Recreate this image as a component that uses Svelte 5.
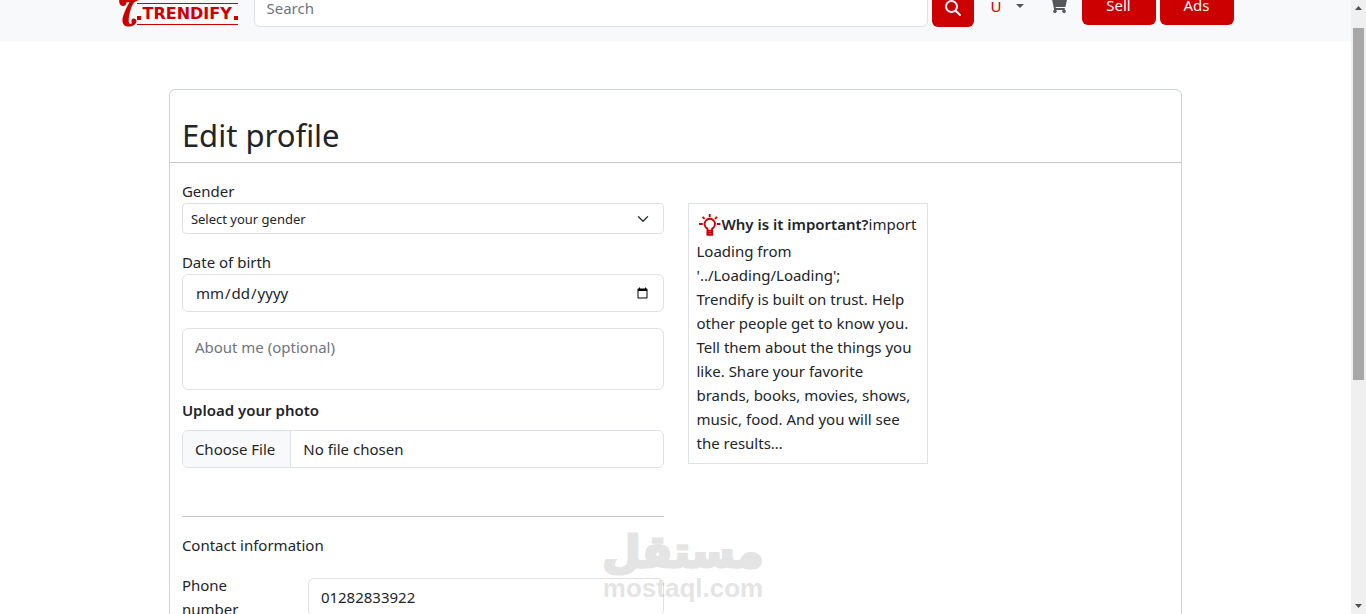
<script lang="ts">
	let search = $state('');
	let gender = $state('');
	let birthDate = $state('');
	let about = $state('');
	let phone = $state('01282833922');
</script>

<div class="shell">
	<div class="page">
		<header class="navbar">
			<div class="container">
				<a class="logo" href="/" aria-label="Trendify home">
					<svg class="swash" viewBox="0 0 22 27" width="22" height="27" aria-hidden="true">
						<path d="M1.200 0C.9 3.500 2.500 6 5 6S8.500 4.200 8.300 2.400L11.500 2C9.500 5.500 7 10.500 5.300 15.500c-1.800 5-1 11 4.700 11 4.700 0 8.500-2.300 8.500-5.300 0-3.200-4.500-3.400-5-.7-.3 1.500.7 2.200 0 3-1.200 1-2.800.2-2.800-2.500C10.700 15 13 6.500 16 2.500 17.500 1.200 19.500.8 21 0z" />
					</svg>
					<span class="wordmark"><i></i>TRENDIFY<i></i></span>
				</a>
				<form class="search" role="search">
					<input class="control" type="search" placeholder="Search" aria-label="Search" bind:value={search} />
					<button class="btn btn-search" type="submit" aria-label="Search">
						<svg viewBox="0 0 16 16" width="16" height="16" fill="none" stroke="currentColor" stroke-width="2" stroke-linecap="round" aria-hidden="true">
							<circle cx="6.500" cy="6.500" r="5.500" />
							<path d="M10.700 10.700L15 15" />
						</svg>
					</button>
				</form>
				<button class="user" type="button" aria-label="Account menu">
					<span>U</span>
					<svg viewBox="0 0 8 4" width="8" height="4" aria-hidden="true"><path d="M0 0h8L4 4z" /></svg>
				</button>
				<a class="cart" href="/cart" aria-label="Cart">
					<svg viewBox="0 0 576 512" width="18" height="16" fill="currentColor" aria-hidden="true">
						<path d="M528 301l47-208c4-15-8-29-23-29H159l-9-45C148 8 138 0 126 0H24C11 0 0 11 0 24v16c0 13 11 24 24 24h70l70 343a56 56 0 1 0 67 9h210a56 56 0 1 0 64-10l5-25c4-15-8-29-23-29H218l-7-32h294c11 0 21-8 23-19z" />
					</svg>
				</a>
				<div class="actions">
					<a class="btn" href="/sell">Sell</a>
					<a class="btn" href="/ads">Ads</a>
				</div>
			</div>
		</header>

		<main class="card">
			<h1>Edit profile</h1>
			<div class="row">
				<form class="col">
					<label for="gender">Gender</label>
					<select id="gender" class="control select" bind:value={gender}>
						<option value="">Select your gender</option>
						<option value="male">Male</option>
						<option value="female">Female</option>
					</select>

					<label for="birth">Date of birth</label>
					<input id="birth" class="control" type="date" bind:value={birthDate} />

					<textarea class="control about" placeholder="About me (optional)" aria-label="About me" bind:value={about}></textarea>

					<label class="strong" for="photo">Upload your photo</label>
					<input id="photo" class="control file" type="file" />

					<hr />
					<p class="section">Contact information</p>
					<div class="phone">
						<label for="phone">Phone number</label>
						<input id="phone" class="control" type="tel" bind:value={phone} />
					</div>
				</form>

				<div class="col">
					<aside class="tip">
						<svg class="bulb" viewBox="0 0 24 24" width="25" height="25" fill="none" stroke="currentColor" stroke-width="1.800" aria-hidden="true">
							<path d="M10 18v-2a5 5 0 1 1 4.500 0v2z M10 18v4h4.500v-4 M10 20h4.500" />
							<path d="M12.200 2v3M2 11.500h3.500M19 11.500h3.500M5.300 4.600l2 2M19.200 4.600l-2 2" />
						</svg><b>Why is it important?</b>import Loading from '../Loading/Loading';
						<p>
							Trendify is built on trust. Help other people get to know you. Tell them about the
							things you like. Share your favorite brands, books, movies, shows, music, food. And you
							will see the results…
						</p>
					</aside>
				</div>
			</div>
		</main>

		<div class="watermark">
			<span class="arabic" lang="ar" dir="rtl">مستقل</span>
			<span class="latin">mostaql.com</span>
		</div>
	</div>

	<div class="scrollbar" aria-hidden="true">
		<svg viewBox="0 0 7 4" width="7" height="4"><path d="M0 4h7L3.500 0z" /></svg>
		<div class="track"><div class="thumb"></div></div>
		<svg viewBox="0 0 7 4" width="7" height="4"><path d="M0 0h7L3.500 4z" /></svg>
	</div>
</div>

<style>
	:global(body) {
		margin: 0;
		overflow: hidden;
	}
	.shell {
		display: flex;
		height: 100vh;
		background: #fff;
		color: #212529;
		font: 15px/24px 'Noto Sans', sans-serif;
	}
	.shell *,
	.shell *::before {
		box-sizing: border-box;
	}
	.page {
		position: relative;
		flex: 1;
		min-width: 0;
		overflow: hidden;
	}

	.navbar {
		height: 41px;
		overflow: hidden;
		background: #f8f9fa;
	}
	.container {
		display: flex;
		align-items: flex-end;
		height: 27px;
		max-width: 1140px;
		margin: 0 auto;
		padding: 0 12px;
	}
	.logo {
		display: flex;
		align-items: flex-end;
		flex: none;
		width: 121px;
		margin-right: 15px;
		color: #c00;
		text-decoration: none;
	}
	.swash {
		flex: none;
		fill: #c00;
	}
	.wordmark {
		display: flex;
		align-items: center;
		gap: 2px;
		height: 22px;
		margin: 0 0 2px -3px;
		border-top: 1px solid #c00;
		border-bottom: 1px solid #c00;
		font: bold 16px/20px 'DejaVu Sans', sans-serif;
	}
	.wordmark i {
		width: 4px;
		height: 4px;
		margin-top: 8px;
		background: #c00;
	}
	.search {
		display: flex;
		align-items: flex-end;
		flex: 1;
		gap: 4px;
	}
	.control {
		display: block;
		width: 100%;
		height: 38px;
		margin: 0;
		padding: 6px 12px;
		border: 1px solid #dee2e6;
		border-radius: 6px;
		background: #fff;
		color: #212529;
		font: inherit;
		appearance: none;
	}
	.control::placeholder {
		color: #6c757d;
		opacity: 1;
	}
	.control::-webkit-calendar-picker-indicator {
		font-size: 13px;
	}
	.btn {
		display: block;
		height: 38px;
		padding: 6px 22px;
		border: 0;
		border-radius: 6px;
		background: #c00;
		color: #f8f9fa;
		font: inherit;
		text-align: center;
		text-decoration: none;
	}
	.btn-search {
		flex: none;
		width: 42px;
		padding: 6px 13px;
	}
	.btn-search svg {
		display: block;
	}
	.user {
		display: flex;
		align-items: center;
		gap: 14px;
		height: 38px;
		margin-left: 17px;
		padding: 0 0 5px;
		border: 0;
		background: none;
		color: #c00;
		font: inherit;
	}
	.user svg {
		fill: #555;
	}
	.cart {
		display: flex;
		height: 30px;
		margin: 0 15px 0 25px;
		color: #55585b;
	}
	.actions {
		display: flex;
		flex: none;
		gap: 4px;
		padding-bottom: 2px;
	}
	.actions .btn {
		width: 74px;
	}

	.card {
		width: 75%;
		margin: 48px auto 0;
		border: 1px solid #ced4da;
		border-radius: 6px;
	}
	h1 {
		margin: 0;
		padding: 24px 12px 6px;
		border-bottom: 1px solid #c7c8c9;
		font-size: 31px;
		font-weight: 400;
		line-height: 42px;
	}
	.row {
		display: grid;
		grid-template-columns: 1fr 1fr;
		padding-top: 16px;
	}
	.col {
		min-width: 0;
		padding: 0 12px;
	}
	.col > .control {
		margin-bottom: 16px;
	}
	label {
		display: block;
	}
	.col .select {
		height: 31px;
		padding: 5px 8px 3px;
		border-radius: 4px;
		background: #fff
			url("data:image/svg+xml,%3csvg xmlns='http://www.w3.org/2000/svg' viewBox='0 0 16 16'%3e%3cpath fill='none' stroke='%23343a40' stroke-linecap='round' stroke-linejoin='round' stroke-width='2' d='m2 5 6 6 6-6'/%3e%3c/svg%3e")
			no-repeat right 14px center / 12px;
		font-size: 13px;
		line-height: 21px;
	}
	.col .about {
		height: 62px;
		margin-bottom: 8px;
		resize: none;
	}
	.strong {
		margin-bottom: 8px;
	}
	.strong,
	b {
		font-weight: 600;
	}
	.file {
		overflow: hidden;
	}
	.file::file-selector-button {
		margin: -6px 12px -6px -12px;
		padding: 6px 15px 6px 12px;
		border: 0 solid #dee2e6;
		border-right-width: 1px;
		border-radius: 0;
		background: #f8f9fa;
		color: #212529;
		font: inherit;
	}
	hr {
		margin: 48px 0 16px;
		border: 0;
		border-top: 1px solid #c7c8c9;
	}
	.section {
		margin: 0 0 16px;
	}
	.phone {
		display: grid;
		grid-template-columns: 102px 1fr;
		gap: 24px;
		align-items: center;
	}
	.tip {
		width: 50%;
		margin-top: 24px;
		padding: 8px;
		border: 1px solid #dee2e6;
	}
	.tip p {
		margin: 0;
	}
	.bulb {
		margin: 0 0 2px;
		color: #c00;
		vertical-align: middle;
	}

	.watermark {
		position: absolute;
		bottom: 12px;
		left: 602px;
		display: flex;
		flex-direction: column;
		align-items: center;
		width: 162px;
		color: #000;
		opacity: 0.1;
		pointer-events: none;
	}
	.arabic {
		font: bold 44px/44px 'DejaVu Sans', sans-serif;
		-webkit-text-stroke: 3px #000;
	}
	.latin {
		font: bold 26px/28px 'Liberation Sans', sans-serif;
	}

	.scrollbar {
		display: flex;
		flex-direction: column;
		align-items: center;
		flex: none;
		width: 15px;
		padding: 6px 0;
		background: #f0f0f0;
	}
	.scrollbar svg {
		flex: none;
		fill: #505050;
	}
	.track {
		flex: 1;
		width: 11px;
		padding: 18px 0;
	}
	.thumb {
		height: 63%;
		background: #a8a8a8;
	}
</style>
